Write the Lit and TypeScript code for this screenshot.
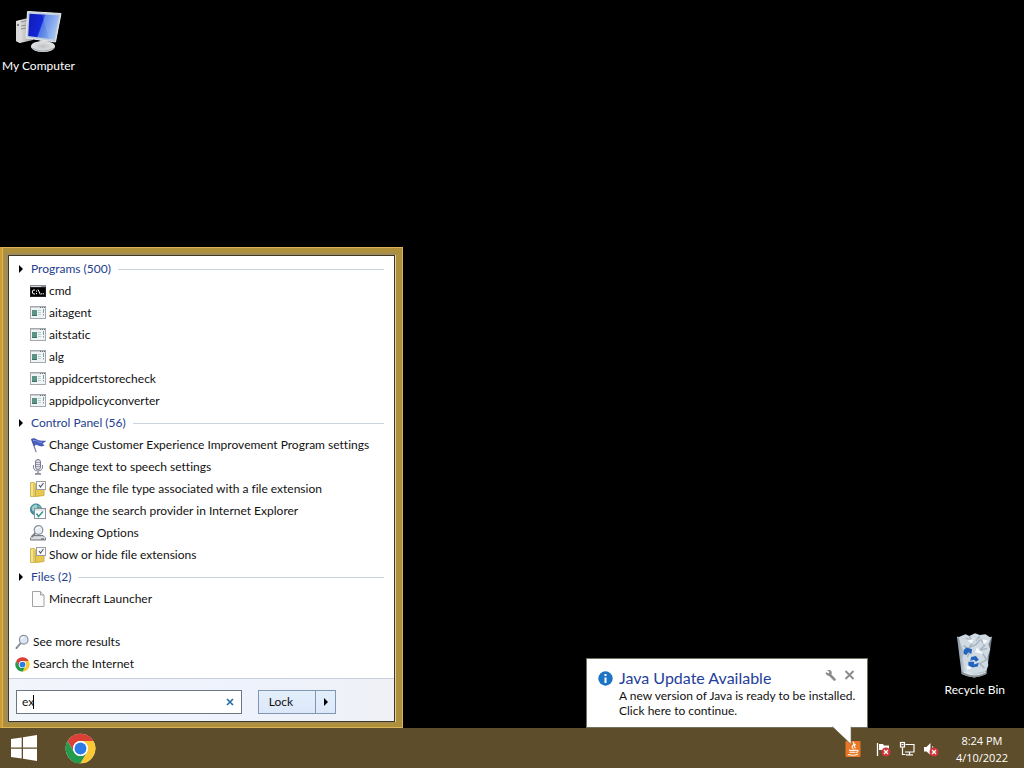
import { LitElement, html, css, svg, TemplateResult } from "lit";
import { customElement, property } from "lit/decorators.js";

const icons: Record<string, TemplateResult> = {
  cmd: html`<svg viewBox="0 0 16 16" width="16" height="16">
    <rect x="0" y="2" width="16" height="12" fill="#8b8f93" /><rect x="1" y="3" width="10" height="1" fill="#d4d8dc" />
    <rect x="0.5" y="4.5" width="15" height="9" fill="#000" stroke="#222" />
    <g fill="none" stroke="#fff" stroke-width="1">
      <path d="M5 7Q2.500 6.200 2.200 9Q2.400 11.500 5 11M6.500 7.500v1.200M6.500 10v1.200M8 6.500L10.300 11.500M11.700 10.200v1.200M13.300 10.200v1.200" />
    </g></svg>`,
  exe: html`<svg viewBox="0 0 16 16" width="16" height="16">
    <rect x="0.5" y="1.5" width="15" height="12" fill="#f1f4f4" stroke="#a3a9ad" />
    <path d="M1 2.5h14" stroke="#c9ced2" /><path d="M10 2.5h1M12 2.5h1M14 2.5h1" stroke="#687077" />
    <rect x="2" y="5" width="5" height="6" fill="#5b9484" /><path d="M2 10h5v1H2z" fill="#3a7165" />
    <path d="M8 5.5h3M8 7.5h3M8 9.5h3" stroke="#c5cece" /><path d="M13.5 4v4M13.5 9v1.5" stroke="#7da19c" /></svg>`,
  flag: html`<svg viewBox="0 0 16 16" width="16" height="16">
    <path d="M1.6 2L6.2 15.2" stroke="#7a849c" stroke-width="1.2" />
    <path d="M1.5 2.2Q4 .8 6.5 2.6T12 4L15.5 4.2L12.2 6.5L14 8.4Q11 9.8 8.5 8.2T4 8.8Z" fill="#4b5fc0" stroke="#3347a0" stroke-width=".6" />
    <path d="M3 3.6Q6 2.8 8 4.6T12 5" fill="none" stroke="#8090e2" /></svg>`,
  mic: html`<svg viewBox="0 0 16 16" width="16" height="16">
    <rect x="5.5" y=".5" width="5" height="10" rx="2.5" fill="#e4e5ec" stroke="#73758a" />
    <path d="M5.5 3.5h5M5.5 5.5h5M5.5 7.5h5" stroke="#85879a" stroke-width=".8" />
    <path d="M3.5 6v3Q4 12 8 12t4.500-3V6M8 12v2" fill="none" stroke="#85879a" />
    <path d="M5 15.2Q8 12.500 11 15.200Z" fill="#c9cad5" stroke="#6d6f82" stroke-width=".8" /></svg>`,
  folder: html`<svg viewBox="0 0 16 16" width="16" height="16">
    <path d="M.5 1.500h4l1 1V15.500h-5z" fill="#ead46d" stroke="#d3ba58" /><path d="M2 2v13" stroke="#fbf0ac" />
    <path d="M5.500 8h8.500v6.500l-8.500 1z" fill="#e7c84e" stroke="#cbae4a" />
    <rect x="6.500" y=".5" width="9" height="8" fill="#fbfbfd" stroke="#9a9ca1" />
    <path d="M9 4l1.500 2L13.500 2" fill="none" stroke="#4e5566" stroke-width="1.100" />
    <path d="M4 3v12" stroke="#d6bd58" /></svg>`,
  web: html`<svg viewBox="0 0 16 16" width="16" height="16">
    <circle cx="6" cy="6.500" r="5.700" fill="#438fa6" stroke="#2b6c82" stroke-width=".6" />
    <path d="M1.500 5Q3 1.500 6.500 1.500L8 4 5 6 4.500 8.500 2.500 8z" fill="#9ed3cd" /><path d="M8.500 2l2 1.500 0 1.500-2-1z" fill="#7bc4a5" />
    <rect x="4.500" y="5.500" width="11" height="10" fill="#fafcfd" stroke="#8b949b" /><path d="M5 7h10" stroke="#c4ced4" />
    <path d="M6.500 10.500l2 3L13 8.500" fill="none" stroke="#38958b" stroke-width="1.500" /></svg>`,
  index: html`<svg viewBox="0 0 16 16" width="16" height="16">
    <path d="M3 10.500h10l2.500 2.500v2h-15v-2z" fill="#c8cbcf" stroke="#777c83" /><path d="M1 13h14" stroke="#eef0f1" /><path d="M11 14h3" stroke="#555" />
    <path d="M5.500 8L1.500 12" stroke="#777d86" stroke-width="1.800" />
    <circle cx="8.500" cy="5" r="4.300" fill="#e8eff4" stroke="#8a9198" stroke-width="1.200" />
    <path d="M6 4.500Q7 2 10 2.500" stroke="#fff" fill="none" stroke-width="1.200" /></svg>`,
  file: html`<svg viewBox="0 0 16 16" width="16" height="16">
    <path d="M2.500.5h8l3.500 3.500v11.500h-11.500z" fill="#fbfbfb" stroke="#a3a3a3" /><path d="M10.500.5v3.500h3.500" fill="#e3e3e3" stroke="#a3a3a3" /></svg>`,
  search: html`<svg viewBox="0 0 16 16" width="15" height="16">
    <path d="M5.800 9.500L1.500 14.500" stroke="#777f8a" stroke-width="2" stroke-linecap="round" /><path d="M5.500 9.500L2 13.500" stroke="#c0c5ce" stroke-width=".7" />
    <circle cx="9.300" cy="5.600" r="4.600" fill="#dae6f6" stroke="#8e939e" stroke-width="1.300" />
    <path d="M6.500 5Q7.500 2.600 10 2.700" stroke="#fff" stroke-width="1.200" fill="none" /></svg>`,
};

const chrome = (size: number) => html`<svg viewBox="0 0 48 48" width=${size} height=${size} aria-hidden="true">
  <circle cx="24" cy="24" r="23" fill="#fff" />
  <path d="M4.080 12.500A23 23 0 0 1 43.920 12.500L24 12.500A11.500 11.500 0 0 0 14.040 29.750Z" fill="#dc3f33" />
  <path d="M43.920 12.500A23 23 0 0 1 24 47L33.960 29.750A11.500 11.500 0 0 0 24 12.500Z" fill="#fcc934" />
  <path d="M24 47A23 23 0 0 1 4.080 12.500L14.040 29.750A11.500 11.500 0 0 0 33.960 29.750Z" fill="#249b4c" />
  <circle cx="24" cy="24" r="11.500" fill="#fff" /><circle cx="24" cy="24" r="9.200" fill="#2f7be5" /></svg>`;

const computer = html`<svg viewBox="-1 0 48 46" width="48" height="46" aria-hidden="true">
  <defs>
    <linearGradient id="scr" x1="0" y1="0" x2="1" y2=".3"><stop offset="0" stop-color="#0d1cb4" /><stop offset=".5" stop-color="#1426d8" /><stop offset=".54" stop-color="#4f78e6" /><stop offset="1" stop-color="#96b9f2" /></linearGradient>
    <linearGradient id="tower"><stop offset="0" stop-color="#f3f3f2" /><stop offset="1" stop-color="#9b9b9b" /></linearGradient>
    <radialGradient id="base"><stop offset="0" stop-color="#bfc1c3" /><stop offset="1" stop-color="#e4e6e8" /></radialGradient>
  </defs>
  <path d="M1 12L11 9.500L18 11V31L5 34L1 32Z" fill="url(#tower)" /><path d="M1 12L5 13.500V34L1 32Z" fill="#d8d9d8" />
  <path d="M6 13l6-1.500M6 17l6-1M6 20l5-1" stroke="#8d8f90" /><circle cx="3" cy="16" r="1" fill="#616565" />
  <path d="M25 29L34 30L33 36L24 35Z" fill="#9ea3a8" />
  <ellipse cx="28" cy="37.500" rx="12" ry="5.500" fill="url(#base)" /><path d="M17 39Q27 45 39 39" fill="none" stroke="#a6a9ac" />
  <path d="M12.500 2.500L46 4.500L40.500 33L11 29Z" fill="#c3cfdd" stroke="#e6ebf2" />
  <path d="M14.500 4.800L44 6.500L39 30.500L13.200 27Z" fill="url(#scr)" />
  <path d="M27 5.500L44 6.500L39 30.500L34 30Z" fill="#dbe9ff" opacity=".15" /></svg>`;

const bin = html`<svg viewBox="0 0 40 48" width="38" height="46" aria-hidden="true">
  <defs>
    <linearGradient id="glass"><stop offset="0" stop-color="#8795a2" /><stop offset=".3" stop-color="#dce7f0" /><stop offset=".7" stop-color="#b3c1ce" /><stop offset="1" stop-color="#66717d" /></linearGradient>
  </defs>
  <path d="M1 4L6 43Q19 50 32 43L38 4Z" fill="url(#glass)" />
  <path d="M3 4L10 1L14 3L20 0L25 2L31 1L37 5L34 12L36 17L33 25L34 34L31 40L22 42L10 40L7 27L9 20L5 12Z" fill="#cfdae3" />
  <path d="M10 5L18 9L14 15L21 12L26 6L30 13L25 18L33 16M8 13L15 18L12 25M28 21L32 28L25 32L30 37M14 3L16 8M25 3L21 8" fill="none" stroke="#a5b3bf" stroke-width="1.500" />
  <path d="M12 8L20 5L17 11ZM28 6L34 8L29 12ZM22 15L29 22L20 20ZM11 34L18 36L12 39Z" fill="#f6f9fb" />
  <path d="M1 4Q20 10 38 4" fill="none" stroke="#c6ced5" opacity=".7" />
  <g fill="#2464bf"><path d="M8 18L11 15L17 17L16 22L13 20L11 23L8 22Z" /><path d="M16 25L21 24L24 28L21 30L19 28L15 29Z" /><path d="M13 30L19 30L19 33L24 31L23 35L17 36L13 34Z" /></g>
  <path d="M6 40Q20 47 32 40L32 43Q20 50 6 43Z" fill="#88929a" /><path d="M8 41Q20 47 31 41" fill="none" stroke="#e9edf0" /></svg>`;

const redBadge = svg`<circle cx="11" cy="11" r="4.500" fill="#cf3438" /><path d="M9 9l4 4M13 9l-4 4" stroke="#fff" stroke-width="1.300" />`;

@customElement("desktop-shortcut")
export class DesktopShortcut extends LitElement {
  @property() label = "";
  static styles = css`
    button {
      display: flex; flex-direction: column; align-items: center; gap: 2px;
      padding: 0; border: 0; background: none; color: #fff;
      font: inherit; line-height: 18px; white-space: nowrap;
    }
  `;
  render() {
    return html`<button type="button"><slot></slot><span>${this.label}</span></button>`;
  }
}

@customElement("result-group")
export class ResultGroup extends LitElement {
  @property() heading = "";
  @property({ attribute: false }) items: [string, string][] = [];
  static styles = css`
    h2 { margin: 0; height: 22px; display: flex; align-items: center; gap: 7px; font: inherit; font-variant-ligatures: none; }
    h2 button { display: flex; align-items: center; gap: 8px; padding: 0; border: 0; background: none; font: inherit; color: #24408f; }
    h2::after { content: ""; flex: 1; height: 1px; background: #cad4df; }
    ul { list-style: none; margin: 0; padding: 0 0 0 11px; }
    a { display: flex; align-items: center; gap: 3px; height: 22px; color: #111; text-decoration: none; white-space: nowrap; }
    svg { flex: none; }
  `;
  render() {
    return html`<h2>
        <button type="button"><svg width="4" height="8" viewBox="0 0 4 8"><path d="M0 0L4 4L0 8Z" /></svg>${this.heading}</button>
      </h2>
      <ul>${this.items.map(([icon, name]) => html`<li><a href="#">${icons[icon]}${name}</a></li>`)}</ul>`;
  }
}

@customElement("start-menu")
export class StartMenu extends LitElement {
  static styles = css`
    :host {
      display: block; box-sizing: border-box; padding: 5px 6px 4px 3px; background: #ae8f3c;
      border: 1px solid #dcb357; border-left: 2px solid #cf9c31; line-height: 18px;
      box-shadow: inset 1px 0 #dcb357;
    }
    .edge { border: solid #a08b5c; border-width: 2px 0 1px 3px; }
    .inner { border: 1px solid #3d3620; box-shadow: 1px 0 #e6d5a4; background: #fff; margin-right: 1px; }
    .results { padding: 2px 10px 0 10px; }
    .more { display: flex; flex-direction: column; padding: 21px 6px 3px; }
    .more a { display: flex; align-items: center; gap: 3px; height: 22px; color: #111; text-decoration: none; }
    .footer { display: flex; gap: 16px; padding: 11px 7px 7px; border-top: 1px solid #c9cedb; background: linear-gradient(90deg, #f3f5fd, #eef2fc 60%, #eff1f6); }
    .search { position: relative; display: flex; align-items: center; box-sizing: border-box; width: 226px; height: 24px; border: 1px solid #6c7683; background: #fff; }
    .search input { flex: 1; min-width: 0; padding: 0 0 0 5px; border: 0; outline: 0; background: none; font: inherit; color: #111; }
    .caret { position: absolute; left: 16px; top: 4px; width: 1px; height: 14px; background: #000; }
    .clear { display: flex; padding: 0 7px; border: 0; background: none; }
    .split { display: flex; height: 24px; box-sizing: border-box; border: 1px solid #8096b2; background: linear-gradient(#e4effc, #dce8f9); }
    .split button { padding: 0; border: 0; background: none; font: inherit; color: #111; }
    .split .lock { width: 56px; padding-right: 12px; }
    .split .menu { width: 20px; border-left: 1px solid #8096b2; display: grid; place-items: center; }
  `;
  render() {
    return html`<div class="edge"><div class="inner">
      <div class="results">
        <result-group heading="Programs (500)" .items=${[["cmd", "cmd"], ["exe", "aitagent"], ["exe", "aitstatic"], ["exe", "alg"], ["exe", "appidcertstorecheck"], ["exe", "appidpolicyconverter"]]}></result-group>
        <result-group heading="Control Panel (56)" .items=${[
          ["flag", "Change Customer Experience Improvement Program settings"],
          ["mic", "Change text to speech settings"],
          ["folder", "Change the file type associated with a file extension"],
          ["web", "Change the search provider in Internet Explorer"],
          ["index", "Indexing Options"],
          ["folder", "Show or hide file extensions"],
        ]}></result-group>
        <result-group heading="Files (2)" .items=${[["file", "Minecraft Launcher"]]}></result-group>
      </div>
      <div class="more">
        <a href="#">${icons.search}See more results</a>
        <a href="#">${chrome(15)}Search the Internet</a>
      </div>
      <div class="footer">
        <div class="search">
          <input type="text" aria-label="Search programs and files" .value=${"ex"} /><span class="caret"></span>
          <button class="clear" type="button" aria-label="Clear search"><svg width="8" height="8" viewBox="0 0 8 8"><path d="M1 1l6 6M7 1l-6 6" stroke="#2a6da8" stroke-width="1.700" /></svg></button>
        </div>
        <div class="split">
          <button class="lock" type="button">Lock</button>
          <button class="menu" type="button" aria-label="More power options"><svg width="4" height="8" viewBox="0 0 4 8"><path d="M0 0L4 4L0 8Z" /></svg></button>
        </div>
      </div>
    </div></div>`;
  }
}

@customElement("update-balloon")
export class UpdateBalloon extends LitElement {
  static styles = css`
    :host { display: block; box-sizing: border-box; background: #fff; border: 1px solid #73705f; padding: 9px 13px 9px 11px; line-height: 15px; color: #111; }
    .row { display: flex; gap: 6px; align-items: flex-start; }
    .body { flex: 1; white-space: nowrap; }
    .head { display: flex; align-items: center; height: 20px; }
    h2 { flex: 1; margin: 0; font-size: 16px; line-height: 20px; font-weight: 400; color: #24409a; }
    .head button { display: flex; padding: 0 0 6px; border: 0; background: none; margin-left: 8px; }
    p { margin: 0; }
    .info { margin-top: 3px; flex: none; }
    .tail { position: absolute; right: 14px; top: 100%; margin-top: -2px; }
  `;
  render() {
    return html`<div class="row">
        <svg class="info" width="15" height="15" viewBox="0 0 15 15"><circle cx="7.500" cy="7.500" r="7.200" fill="#1e74c4" /><path d="M7.500 3v2M7.500 6.500v5.500" stroke="#fff" stroke-width="2" /></svg>
        <div class="body">
          <div class="head">
            <h2>Java Update Available</h2>
            <button type="button" aria-label="Notification options"><svg width="11" height="12" viewBox="0 0 11 12"><path d="M4.500 5.500L9.500 10.500" stroke="#8b8b8b" stroke-width="2.500" stroke-linecap="round" /><path d="M2 1L4.500 3L3.500 4.500L.8 3A3 3 0 0 0 5 6.500A3 3 0 0 0 5 1Z" fill="#8b8b8b" /></svg></button>
            <button class="close" type="button" aria-label="Close"><svg width="11" height="12" viewBox="0 0 11 12"><path d="M1.500 2l8 8M9.500 2l-8 8" stroke="#8b8b8b" stroke-width="1.900" /></svg></button>
          </div>
          <p>A new version of Java is ready to be installed.<br />Click here to continue.</p>
        </div>
      </div>
      <svg class="tail" width="22" height="20" viewBox="0 0 22 20"><path d="M1 0V1L20 19V0Z" fill="#fff" /><path d="M1 1.500L20 19.500V1.500" fill="none" stroke="#73705f" stroke-width=".6" /></svg>`;
  }
}

@customElement("app-root")
export class AppRoot extends LitElement {
  static styles = css`
    :host { display: grid; grid-template-rows: 1fr auto; height: 100vh; overflow: hidden; background: #000; font: 12px/17px Lato, "Open Sans", sans-serif; font-variant-ligatures: none; }
    main { position: relative; }
    .computer, .bin, .start, .balloon { position: absolute; }
    .computer { left: 2px; top: 9px; }
    .bin { right: 19px; bottom: 29px; }
    .start { left: 0; bottom: 0; width: 403px; }
    .balloon { right: 156px; bottom: 0; width: 282px; }
    footer { display: flex; align-items: center; justify-content: space-between; height: 40px; background: #5d4d2a; }
    .apps, .tray { display: flex; align-items: center; }
    .apps { gap: 28px; padding-left: 11px; }
    .tray { gap: 8px; padding-right: 16px; }
    button { display: flex; padding: 0; border: 0; background: none; color: #fff; font: inherit; }
    .clock { flex-direction: column; align-items: center; margin-left: 9px; padding-top: 2px; font: 11px/17px "Open Sans", "Noto Sans", sans-serif; }
    .java { margin-right: 6px; }
    .tray svg { margin-top: 2px; }
  `;
  render() {
    return html`<main>
        <desktop-shortcut class="computer" label="My Computer">${computer}</desktop-shortcut>
        <desktop-shortcut class="bin" label="Recycle Bin">${bin}</desktop-shortcut>
        <start-menu class="start"></start-menu>
        <update-balloon class="balloon" role="alert"></update-balloon>
      </main>
      <footer>
        <nav class="apps" aria-label="Taskbar">
          <button type="button" aria-label="Start"><svg width="26" height="26" viewBox="0 0 26 26" fill="#fff"><path d="M0 4L10.700 2.500V12.500H0ZM12 2.300L26 0V12.500H12ZM0 13.700H10.700V23.500L0 22ZM12 13.700H26V26L12 23.800Z" /></svg></button>
          <button type="button" aria-label="Google Chrome">${chrome(31)}</button>
        </nav>
        <div class="tray">
          <button class="java" type="button" aria-label="Java update"><svg width="16" height="16" viewBox="0 0 16 16"><rect x=".5" width="15" height="16" rx="1" fill="#e97724" /><path d="M8 1Q10 3 8 4.500T8.500 8M10.500 3Q8.500 5 10.500 7M4 9Q7 10 11 9M4.500 11.200h6M11 9.500Q14 8.500 12.500 11L11 11.500M3 13.500Q8 15 13 13.300" fill="none" stroke="#fff" stroke-width="1.100" /></svg></button>
          <button type="button" aria-label="Action Center"><svg width="16" height="16" viewBox="0 0 16 16"><path d="M2.500 2v13" stroke="#fff" stroke-width="1.300" /><path d="M4 3h4l1 1.500h5v6H9L8 9H4Z" fill="#fff" />${redBadge}</svg></button>
          <button type="button" aria-label="Network"><svg width="16" height="16" viewBox="0 0 16 16" fill="none" stroke="#fff" stroke-width="1.200"><path d="M6.500 3.500H15v7.500H6M10.500 11v2.500M7 13.800h7M3.500 6.500v7h3" /><rect x="1.500" y="1.500" width="4" height="4.500" /><path d="M2.500 3.500h2" /></svg></button>
          <button type="button" aria-label="Volume muted"><svg width="16" height="16" viewBox="0 0 16 16"><path d="M1 6h2.500L7.500 2v12L3.500 10.500H1Z" fill="#fff" /><path d="M9.500 5Q11 8 9.500 11" stroke="#ddd6c4" fill="none" />${redBadge}</svg></button>
          <button class="clock" type="button"><span>8:24 PM</span><span>4/10/2022</span></button>
        </div>
      </footer>`;
  }
}
